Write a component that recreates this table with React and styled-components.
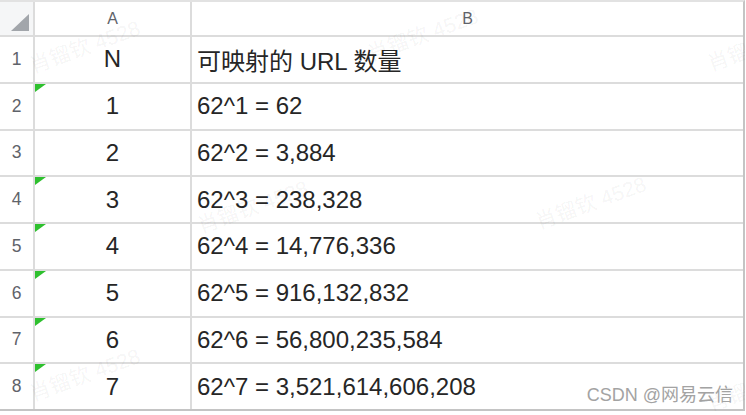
import React from "react";
import styled, { createGlobalStyle } from "styled-components";

const GlobalStyle = createGlobalStyle`
  html, body {
    margin: 0;
    padding: 0;
    background: #fff;
  }
  body {
    font-family: "Liberation Sans", "Noto Sans CJK SC", sans-serif;
  }
`;

const Page = styled.div`
  position: relative;
  width: 745px;
  height: 411px;
  overflow: hidden;
`;

const Sheet = styled.div`
  display: grid;
  grid-template-columns: 33px 155px 1fr;
  grid-template-rows: 33px repeat(8, 1fr);
  gap: 2px;
  height: 100%;
  box-sizing: border-box;
  background: #dcdcdc;
  border-top: 2px solid #e2e2e2;
  border-right: 2px solid #c4c4c4;
  border-bottom: 2px solid #c4c4c4;
`;

const Corner = styled.div`
  background: #f5f6f7;
  display: flex;
  align-items: flex-end;
  justify-content: flex-end;
  padding: 0 4px 4px 0;
`;

const ColHead = styled.div`
  background: #fff;
  color: #5f636a;
  font-size: 16px;
  display: flex;
  align-items: center;
  justify-content: center;
`;

const RowHead = styled.div`
  background: #fff;
  color: #5f636a;
  font-size: 17.5px;
  display: flex;
  align-items: center;
  justify-content: center;
`;

const Cell = styled.div`
  position: relative;
  background: #fff;
  color: #262626;
  font-size: 24px;
  display: flex;
  align-items: center;
  justify-content: ${(p) => (p.$center ? "center" : "flex-start")};
  padding-left: ${(p) => (p.$center ? "0" : "5px")};
  white-space: nowrap;

  &::before {
    content: "";
    display: ${(p) => (p.$flag ? "block" : "none")};
    position: absolute;
    top: 0;
    left: 0;
    border-top: 8px solid #2ec02e;
    border-right: 11px solid transparent;
  }
`;

const Watermarks = styled.div`
  position: absolute;
  inset: 0;
  pointer-events: none;
`;

const Mark = styled.div`
  position: absolute;
  font-size: 21px;
  color: rgba(0, 0, 0, 0.055);
  transform: rotate(-20deg);
  transform-origin: left center;
  white-space: nowrap;
`;

const Credit = styled.div`
  position: absolute;
  right: 12px;
  bottom: 5px;
  font-size: 18px;
  color: #a3a3a3;
  text-shadow: 0 0 2px #fff;
`;

const rows = [
  { n: "N", v: "可映射的 URL 数量", flag: false },
  { n: "1", v: "62^1 = 62", flag: true },
  { n: "2", v: "62^2 = 3,884", flag: false },
  { n: "3", v: "62^3 = 238,328", flag: true },
  { n: "4", v: "62^4 = 14,776,336", flag: true },
  { n: "5", v: "62^5 = 916,132,832", flag: true },
  { n: "6", v: "62^6 = 56,800,235,584", flag: true },
  { n: "7", v: "62^7 = 3,521,614,606,208", flag: true },
];

const marks = [
  [30, 62], [368, 50], [708, 60],
  [198, 222], [536, 218],
  [30, 390], [708, 400],
];

export default function App() {
  return (
    <Page>
      <GlobalStyle />
      <Sheet>
        <Corner>
          <svg width="18" height="17" viewBox="0 0 18 17">
            <polygon points="0,17 18,17 18,0" fill="#a2a6ab" />
          </svg>
        </Corner>
        <ColHead>A</ColHead>
        <ColHead>B</ColHead>
        {rows.map((r, i) => (
          <React.Fragment key={i}>
            <RowHead>{i + 1}</RowHead>
            <Cell $center $flag={r.flag}>{r.n}</Cell>
            <Cell>{r.v}</Cell>
          </React.Fragment>
        ))}
      </Sheet>
      <Watermarks>
        {marks.map(([x, y], i) => (
          <Mark key={i} style={{ left: x, top: y - 12 }}>肖镏钦 4528</Mark>
        ))}
      </Watermarks>
      <Credit>CSDN @网易云信</Credit>
    </Page>
  );
}
